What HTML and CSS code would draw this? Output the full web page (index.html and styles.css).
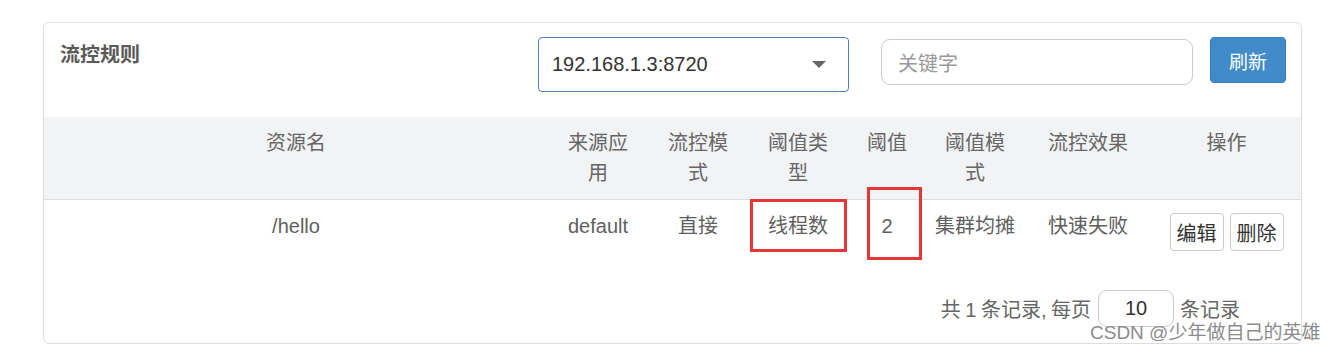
FILE: index.html
```html
<!DOCTYPE html>
<html lang="zh-CN">
<head>
<meta charset="utf-8">
<title>流控规则</title>
<link rel="stylesheet" href="styles.css">
</head>
<body>
<div class="card">
  <div class="toolbar">
    <div class="title">流控规则</div>
    <div class="select">
      <span class="select-text">192.168.1.3:8720</span>
      <span class="caret"></span>
    </div>
    <div class="search">关键字</div>
    <button class="btn-primary">刷新</button>
  </div>
  <table class="rules">
    <colgroup>
      <col class="c-res"><col class="c-app"><col class="c-mode"><col class="c-type">
      <col class="c-count"><col class="c-cmode"><col class="c-eff"><col class="c-op">
    </colgroup>
    <thead>
      <tr>
        <th>资源名</th><th>来源应用</th><th>流控模式</th><th>阈值类型</th>
        <th>阈值</th><th>阈值模式</th><th>流控效果</th><th>操作</th>
      </tr>
    </thead>
    <tbody>
      <tr>
        <td>/hello</td><td>default</td><td>直接</td><td>线程数</td>
        <td>2</td><td>集群均摊</td><td>快速失败</td>
        <td class="ops"><button class="btn">编辑</button><button class="btn">删除</button></td>
      </tr>
    </tbody>
  </table>
  <div class="footer">
    <span class="total">共 1 条记录, 每页</span>
    <span class="page-size">10</span>
    <span>条记录</span>
  </div>
</div>
<div class="mark mark-type"></div>
<div class="mark mark-count"></div>
<div class="watermark">CSDN @少年做自己的英雄</div>
</body>
</html>
```

FILE: styles.css
```css
html, body {
  margin: 0;
  padding: 0;
  background: #fff;
}
body {
  font-family: "Liberation Sans", "Noto Sans CJK SC", sans-serif;
  color: #666;
  position: relative;
  width: 1337px;
  height: 354px;
  overflow: hidden;
}
.card {
  box-sizing: border-box;
  width: 1259px;
  margin: 22px 0 0 43px;
  border: 1px solid #ddd;
  border-radius: 6px;
  background: #fff;
}
.toolbar {
  display: flex;
  align-items: flex-start;
  padding: 14px 15px 0 16px;
}
.title {
  font-size: 20px;
  font-weight: bold;
  line-height: 30px;
  margin-top: 3px;
  color: #5a5a5a;
  margin-right: auto;
}
.select {
  box-sizing: border-box;
  width: 311px;
  height: 55px;
  border: 1px solid #4a80b8;
  border-radius: 4px;
  display: flex;
  align-items: center;
  justify-content: space-between;
  padding: 0 22px 0 13px;
  font-size: 20px;
  color: #333;
}
.caret {
  width: 0;
  height: 0;
  border-left: 7px solid transparent;
  border-right: 7px solid transparent;
  border-top: 7px solid #666;
}
.search {
  box-sizing: border-box;
  width: 312px;
  height: 46px;
  margin: 2px 0 0 32px;
  border: 1px solid #ccc;
  border-radius: 9px;
  padding: 0 16px;
  display: flex;
  align-items: center;
  font-size: 20px;
  color: #999;
}
.btn-primary {
  box-sizing: border-box;
  width: 76px;
  height: 46px;
  margin-left: 17px;
  border: 1px solid #3a80bf;
  border-radius: 4px;
  background: #428bca;
  color: #fff;
  font-family: inherit;
  font-size: 19px;
  padding: 0;
}
.rules {
  width: 100%;
  margin-top: 25px;
  border-collapse: collapse;
  table-layout: fixed;
  font-size: 20px;
  line-height: 30px;
}
.c-res { width: 504px; }
.c-app { width: 100px; }
.c-mode { width: 100px; }
.c-type { width: 100px; }
.c-count { width: 78px; }
.c-cmode { width: 98px; }
.c-eff { width: 128px; }
.c-op { width: 149px; }
.rules th {
  background: #f2f3f5;
  font-weight: normal;
  color: #666;
  padding: 11px 12px;
  text-align: center;
  vertical-align: top;
  border-bottom: 1px solid #ddd;
}
.rules td {
  padding: 11px 8px;
  text-align: center;
  vertical-align: top;
  color: #606060;
}
.rules td.ops {
  padding: 13px 0 11px;
  white-space: nowrap;
}
.btn {
  box-sizing: border-box;
  width: 54px;
  height: 38px;
  margin: 0 3px;
  padding: 0;
  border: 1px solid #ccc;
  border-radius: 4px;
  background: #fff;
  color: #333;
  font-family: inherit;
  font-size: 20px;
  vertical-align: top;
}
.footer {
  display: flex;
  justify-content: flex-end;
  align-items: center;
  padding: 28px 61px 16px 0;
  font-size: 20px;
  color: #666;
}
.total {
  word-spacing: -1px;
}
.page-size {
  box-sizing: border-box;
  width: 76px;
  height: 37px;
  margin: 0 6px 0 7px;
  border: 1px solid #ccc;
  border-radius: 9px;
  display: flex;
  align-items: center;
  justify-content: center;
  color: #333;
}
.mark {
  position: absolute;
  box-sizing: border-box;
  border: 3px solid #e63737;
}
.mark-type {
  left: 750px;
  top: 199px;
  width: 97px;
  height: 53px;
}
.mark-count {
  left: 867px;
  top: 187px;
  width: 55px;
  height: 73px;
}
.watermark {
  position: absolute;
  left: 1090px;
  top: 320px;
  font-size: 19px;
  line-height: 26px;
  color: #8c8c8c;
}
```
